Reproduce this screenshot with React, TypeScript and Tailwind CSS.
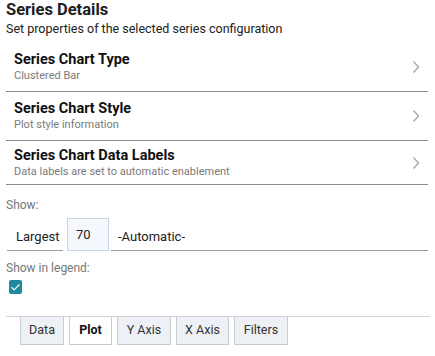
import { Check } from 'lucide-react'

const rows = [
  { title: 'Series Chart Type', sub: 'Clustered Bar', h: 'h-[49px]' },
  { title: 'Series Chart Style', sub: 'Plot style information', h: 'h-[49px]' },
  { title: 'Series Chart Data Labels', sub: 'Data labels are set to automatic enablement', h: 'h-[44px]' },
]

const tabs = [
  { name: 'Data', w: 'w-[44px]' },
  { name: 'Plot', w: 'w-[43px]' },
  { name: 'Y Axis', w: 'w-[54px]' },
  { name: 'X Axis', w: 'w-[53px]' },
  { name: 'Filters', w: 'w-[54px]' },
]

function Chevron() {
  return (
    <svg width="8" height="14" viewBox="0 0 8 14" fill="none" className="shrink-0">
      <path d="M1.5 1.5 L6.5 7 L1.5 12.5" stroke="#a8a8a8" strokeWidth="1.4" />
    </svg>
  )
}

export default function App() {
  return (
    <div className="w-[435px] h-[356px] bg-white font-['Roboto',sans-serif] text-[#212121] px-[6px] overflow-hidden">
      {/* header */}
      <div className="pt-[1px]">
        <div className="text-[16.5px] font-bold leading-[18px]">Series Details</div>
        <div className="text-[12.5px] leading-[14px] mt-[3px]">Set properties of the selected series configuration</div>
      </div>

      {/* property rows */}
      <div className="mt-[7px] w-[422px]">
        {rows.map(r => (
          <div key={r.title} className={`${r.h} flex items-center border-b border-[#8a8a8a] pl-[8px] pr-[8px]`}>
            <div className="flex-1">
              <div className="text-[14.5px] font-bold leading-[18px] text-[#111]">{r.title}</div>
              <div className="text-[11px] leading-[14px] text-[#7a7a7a]">{r.sub}</div>
            </div>
            <Chevron />
          </div>
        ))}
      </div>

      {/* show */}
      <div className="mt-[13px] text-[12px] leading-[14px] text-[#777]">Show:</div>
      <div className="mt-[6px] flex items-end w-[422px]">
        <div className="w-[56px] ml-[1px] border-b border-[#9a9a9a] h-[28px] flex items-center pl-[9px] text-[13px]">Largest</div>
        <div className="ml-[4px] w-[42px] h-[33px] border border-[#c9d6e3] bg-[#f4f8fc] flex items-center pl-[8px] text-[13px]">70</div>
        <div className="ml-[2px] flex-1 border-b border-[#9a9a9a] h-[28px] flex items-center pl-[7px] text-[13px]">-Automatic-</div>
      </div>

      <div className="mt-[10px] text-[12px] leading-[14px] text-[#777]">Show in legend:</div>
      <div className="mt-[5px] ml-[3px] w-[13px] h-[14px] rounded-[2px] bg-[#1f8a9e] flex items-center justify-center">
        <Check size={11} color="white" strokeWidth={2.5} />
      </div>

      {/* tabs */}
      <div className="mt-[22px] border-t border-[#d0d4d8] flex gap-[5px] pl-[14px] w-[424px]">
        {tabs.map(t => (
          <div
            key={t.name}
            className={
              t.name === 'Plot'
                ? `${t.w} h-[28px] bg-white border border-t-0 border-[#c8ccd0] flex items-center justify-center text-[12.5px] font-bold text-[#111]`
                : `${t.w} h-[28px] bg-[#edf1f5] border border-t-0 border-[#c8ccd0] flex items-center justify-center text-[12.5px] text-[#333]`
            }
          >
            {t.name}
          </div>
        ))}
      </div>
    </div>
  )
}
